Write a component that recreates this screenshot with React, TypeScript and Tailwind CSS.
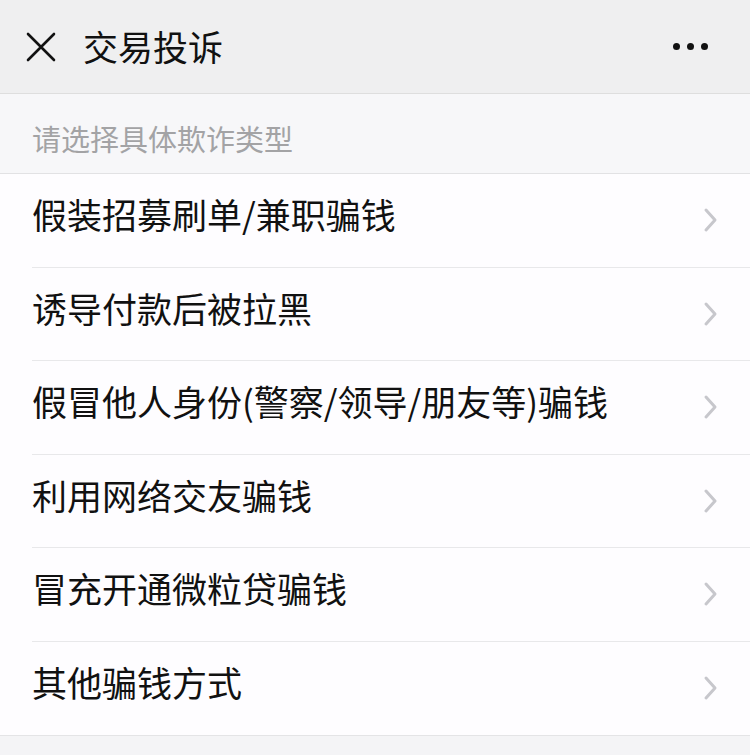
const items = [
  '假装招募刷单/兼职骗钱',
  '诱导付款后被拉黑',
  '假冒他人身份(警察/领导/朋友等)骗钱',
  '利用网络交友骗钱',
  '冒充开通微粒贷骗钱',
  '其他骗钱方式',
];

const font = "font-['Noto_Sans_CJK_SC','Noto_Sans',sans-serif]";

function Chevron() {
  return (
    <svg width="18" height="26" viewBox="0 0 18 26" fill="none" className="shrink-0">
      <path d="M4 3l9 10-9 10" stroke="#c7c7cc" strokeWidth="3" strokeLinecap="round" strokeLinejoin="round" />
    </svg>
  );
}

export default function App() {
  return (
    <div className={`min-h-screen bg-[#f4f4f6] text-[#111] ${font}`}>
      {/* Header */}
      <header className="h-[94px] bg-[#efeff0] border-b border-[#dedede] flex items-center pl-[26px] pr-[42px]">
        <svg width="30" height="30" viewBox="0 0 30 30" className="shrink-0">
          <path d="M2 2l26 26M28 2L2 28" stroke="#111" strokeWidth="2.6" strokeLinecap="round" />
        </svg>
        <h1 className="ml-[27px] text-[35px] leading-none font-normal pb-[2px]">交易投诉</h1>
        <div className="ml-auto flex items-center gap-[7px]">
          <span className="w-[7px] h-[7px] rounded-full bg-[#111]" />
          <span className="w-[7px] h-[7px] rounded-full bg-[#111]" />
          <span className="w-[7px] h-[7px] rounded-full bg-[#111]" />
        </div>
      </header>

      {/* Section title */}
      <div className="h-[80px] bg-[#f7f7f9] border-b border-[#e2e2e4] flex items-center pl-[32px] pt-[10px]">
        <p className="text-[29px] leading-none text-[#a3a3a5]">请选择具体欺诈类型</p>
      </div>

      {/* Options */}
      <ul className="bg-[#fefdff] border-b border-[#e4e4e6]">
        {items.map((item, i) => (
          <li key={item} className="pl-[32px]">
            <div
              className={`h-[93.5px] flex items-center pr-[30px] ${i < items.length - 1 ? 'border-b border-[#e8e8ea]' : ''}`}
            >
              <span className="text-[35px] leading-none flex-1 pb-[13px]">{item}</span>
              <Chevron />
            </div>
          </li>
        ))}
      </ul>
    </div>
  );
}
